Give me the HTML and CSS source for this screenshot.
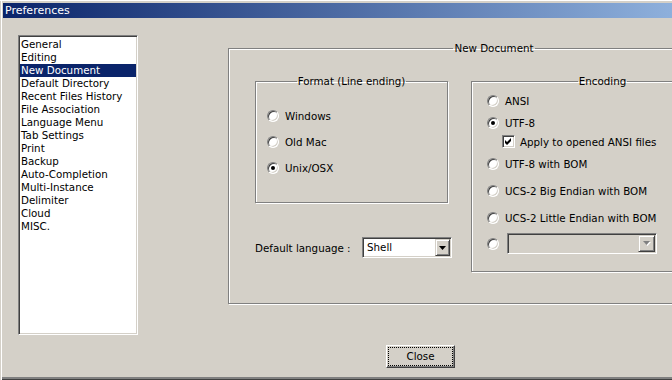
FILE: index.html
```html
<!DOCTYPE html>
<html lang="en">
  <head>
    <meta charset="UTF-8" />
    <meta name="viewport" content="width=device-width, initial-scale=1.0" />
    <title>Preferences</title>
    <link rel="stylesheet" href="styles.css">
  </head>
  <body>
    <div class="window">
      <div class="titlebar">Preferences</div>

      <div class="client">
        <ul class="listbox">
          <li>General</li>
          <li>Editing</li>
          <li class="selected">New Document</li>
          <li>Default Directory</li>
          <li>Recent Files History</li>
          <li>File Association</li>
          <li>Language Menu</li>
          <li>Tab Settings</li>
          <li>Print</li>
          <li>Backup</li>
          <li>Auto-Completion</li>
          <li>Multi-Instance</li>
          <li>Delimiter</li>
          <li>Cloud</li>
          <li>MISC.</li>
        </ul>

        <div class="panel">
          <fieldset class="group group-main">
            <legend>New Document</legend>
            <div class="main-row">
              <div class="format-col">
                <fieldset class="group group-format">
                  <legend>Format (Line ending)</legend>
                  <div class="opt"><span class="radio"></span>Windows</div>
                  <div class="opt"><span class="radio"></span>Old Mac</div>
                  <div class="opt"><span class="radio on"></span>Unix/OSX</div>
                </fieldset>

                <div class="lang-row">
                  <span>Default language :</span>
                  <div class="combo">
                    <span class="combo-text">Shell</span>
                    <span class="combo-btn">
                      <svg width="7" height="4" viewBox="0 0 7 4"><polygon points="0,0 7,0 3.5,4" fill="#000"/></svg>
                    </span>
                  </div>
                </div>
              </div>

              <fieldset class="group group-enc">
                <legend>Encoding</legend>
                <div class="opt first"><span class="radio"></span>ANSI</div>
                <div class="opt near"><span class="radio on"></span>UTF-8</div>
                <div class="check-row">
                  <span class="check">
                    <svg width="11" height="11" viewBox="0 0 11 11"><polygon points="2,4 4,6 8,2 8,5 4,9 2,7" fill="#000"/></svg>
                  </span>
                  Apply to opened ANSI files
                </div>
                <div class="opt near"><span class="radio"></span>UTF-8 with BOM</div>
                <div class="opt"><span class="radio"></span>UCS-2 Big Endian with BOM</div>
                <div class="opt"><span class="radio"></span>UCS-2 Little Endian with BOM</div>
                <div class="opt near combo-opt">
                  <span class="radio"></span>
                  <div class="combo combo-off">
                    <span class="combo-text"></span>
                    <span class="combo-btn">
                      <svg width="8" height="5" viewBox="0 0 8 5"><polygon points="1,1 8,1 4.5,5" fill="#fff"/><polygon points="0,0 7,0 3.5,4" fill="#808080"/></svg>
                    </span>
                  </div>
                </div>
              </fieldset>
            </div>
          </fieldset>

          <button class="btn"><span class="btn-focus">Close</span></button>
        </div>
      </div>
    </div>
  </body>
</html>
```

FILE: styles.css
```css
* {
  box-sizing: border-box;
}

body {
  margin: 0;
  background-color: #d4d0c8;
  font-family: "DejaVu Sans", sans-serif;
  font-size: 10.3px;
  color: #000;
}

.window {
  width: 672px;
  height: 380px;
  overflow: hidden;
  padding: 3px 0 0 3px;
  background-color: #d4d0c8;
  box-shadow: inset 0 1px 0 #fff, inset 1px 0 0 #d4d0c8, inset 2px 0 0 #fff,
    inset 0 -1px 0 #404040, inset 0 -3px 0 #808080;
}

.titlebar {
  height: 15px;
  line-height: 15px;
  padding-left: 2px;
  color: #fff;
  font-size: 11px;
  background: linear-gradient(to right, #0a246a, #8eb0dc);
}

.client {
  display: flex;
  align-items: flex-start;
  padding: 17px 0 0 15px;
}

/* sunken list on the left */
.listbox {
  width: 120px;
  height: 300px;
  flex-shrink: 0;
  margin: 0;
  padding: 2px 1px 1px;
  list-style: none;
  background-color: #fff;
  border: 1px solid;
  border-color: #808080 #fff #fff #808080;
  box-shadow: inset 1px 1px 0 #404040, inset -1px -1px 0 #d4d0c8;
}

.listbox li {
  height: 13px;
  line-height: 13px;
  padding-left: 1px;
  white-space: nowrap;
}

.listbox .selected {
  background-color: #0a246a;
  color: #fff;
}

.panel {
  margin: 7px 0 0 90px;
  flex-shrink: 0;
}

/* etched group boxes */
.group {
  margin: 0;
  min-width: 0;
  border: 1px solid #808080;
  box-shadow: 1px 1px 0 #fff, inset 1px 1px 0 #fff;
}

.group legend {
  margin: 0 auto;
  padding: 0 1px;
  line-height: 13px;
  white-space: nowrap;
}

.group-main {
  width: 506px;
  padding: 20px 0 31px 26px;
}

.main-row {
  display: flex;
  align-items: flex-start;
}

.format-col {
  width: 197px;
  flex-shrink: 0;
}

.group-format {
  width: 193px;
  padding: 21px 11px 28px;
}

.group-enc {
  width: 248px;
  flex-shrink: 0;
  margin-left: 19px;
  padding: 6px 0 17px 15px;
}

.opt {
  display: flex;
  align-items: center;
  height: 13px;
  white-space: nowrap;
}

.group-format .opt + .opt {
  margin-top: 13px;
}

.group-enc .opt {
  margin-top: 14px;
}

.group-enc .opt.first {
  margin-top: 0;
}

.group-enc .opt.near {
  margin-top: 9px;
}

.radio {
  width: 12px;
  height: 12px;
  flex-shrink: 0;
  margin-right: 6px;
  border-radius: 50%;
  background-color: #fff;
  border: 1px solid;
  border-color: #808080 #fff #fff #808080;
  box-shadow: inset 1px 1px 0 #404040, inset -1px -1px 0 #d4d0c8;
}

.radio.on::after {
  content: "";
  display: block;
  width: 4px;
  height: 4px;
  margin: 3px;
  border-radius: 50%;
  background-color: #000;
}

.check-row {
  display: flex;
  align-items: center;
  height: 13px;
  margin: 6px 0 0 15px;
  white-space: nowrap;
}

.check {
  display: flex;
  width: 13px;
  height: 13px;
  margin-right: 5px;
  background-color: #fff;
  border: 1px solid;
  border-color: #808080 #fff #fff #808080;
  box-shadow: inset 1px 1px 0 #404040, inset -1px -1px 0 #d4d0c8;
}

.lang-row {
  display: flex;
  align-items: center;
  justify-content: space-between;
  margin-top: 34px;
}

.combo {
  display: flex;
  width: 90px;
  height: 21px;
  padding: 1px;
  background-color: #fff;
  border: 1px solid;
  border-color: #808080 #fff #fff #808080;
  box-shadow: inset 1px 1px 0 #404040, inset -1px -1px 0 #d4d0c8;
}

.combo-text {
  flex: 1;
  padding-left: 3px;
  line-height: 17px;
}

.combo-btn {
  display: flex;
  align-items: center;
  justify-content: center;
  width: 15px;
  height: 17px;
  background-color: #d4d0c8;
  border: 1px solid;
  border-color: #d4d0c8 #404040 #404040 #d4d0c8;
  box-shadow: inset 1px 1px 0 #fff, inset -1px -1px 0 #808080;
}

.combo-opt {
  height: 21px;
}

.combo-off {
  width: 150px;
  margin-left: 2px;
  background-color: #d4d0c8;
}

.combo-off .combo-btn {
  width: 17px;
}

.btn {
  display: block;
  width: 69px;
  height: 23px;
  margin: 41px 0 0 158px;
  padding: 1px;
  font: inherit;
  color: #000;
  background-color: #d4d0c8;
  border: 1px solid;
  border-color: #fff #404040 #404040 #fff;
  box-shadow: inset -1px -1px 0 #808080;
}

.btn-focus {
  display: block;
  height: 19px;
  line-height: 17px;
  text-align: center;
  border: 1px dotted #000;
}
```
